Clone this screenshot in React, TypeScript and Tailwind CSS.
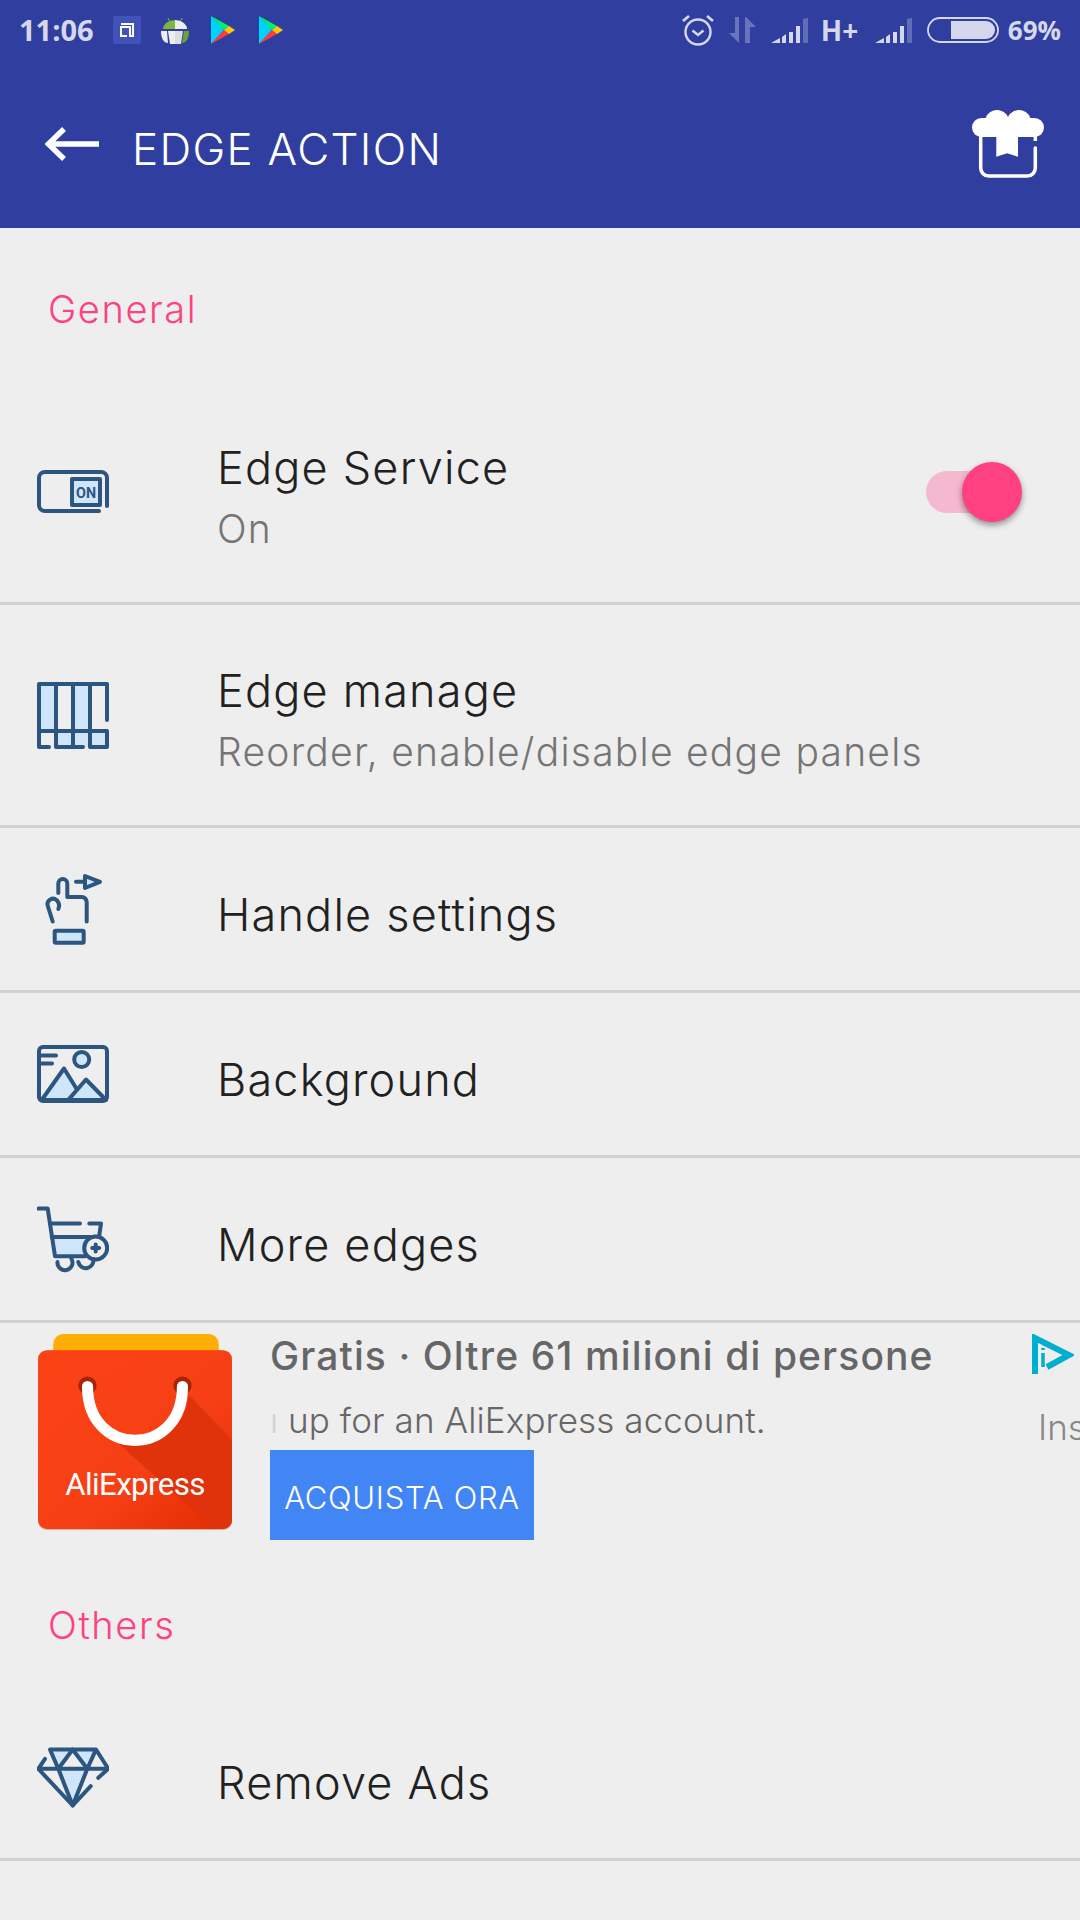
import React from "react";

const S = "#2c5580";
const F = "#cfe6fa";
const common = { fill: "none", stroke: S, strokeWidth: 4, strokeLinecap: "round" as const, strokeLinejoin: "round" as const };

function OnIcon() {
  return (
    <svg width="72" height="72" viewBox="0 0 72 72">
      <g {...common}>
        <path d="M70 50V22a6 6 0 0 0-6-6H8a6 6 0 0 0-6 6v27a6 6 0 0 0 6 6h54" />
        <rect x="35" y="23" width="28" height="26" fill={F} strokeWidth="4" />
      </g>
      <text x="49" y="41.5" textAnchor="middle" fontSize="15" fontWeight="700" fill={S} fontFamily="'Roboto', sans-serif" textLength="20" lengthAdjust="spacingAndGlyphs">ON</text>
    </svg>
  );
}
function ManageIcon() {
  return (
    <svg width="72" height="72" viewBox="0 0 72 72">
      <path fill={F} d="M2 5h17v47H2zM36 5h17v47H36zM19 52h34v16H19zM53 52h17v16H53z" />
      <path {...common} d="M2 5H70V41M2 5V68H12M19 5V68H46M36 5V68M53 5V68H70V52H2" />
    </svg>
  );
}
function HandleIcon() {
  return (
    <svg width="72" height="72" viewBox="0 0 72 72">
      <g {...common}>
        <path d="M21.3 20V10.5a4.5 4.5 0 0 1 9 0V24H44.7a5 5 0 0 1 5 5V48.5" />
        <path d="M15.7 48.5L10.5 32a5.5 5.5 0 0 1 9-5 8 8 0 0 1 1.8 9" />
        <rect x="17.7" y="57.8" width="29" height="12" rx="1" fill={F} />
        <path d="M39 8.8H48" />
        <path d="M48 3L63 8.8 48 15z" fill={F} />
      </g>
    </svg>
  );
}
function BgIcon() {
  return (
    <svg width="72" height="72" viewBox="0 0 72 72">
      <g {...common}>
        <rect x="2" y="9" width="68" height="54" rx="4" />
        <path d="M2 17.5H19M2 25.5H15" />
        <circle cx="44.7" cy="21.5" r="7.5" fill={F} />
        <path d="M4.7 62L27 30.5 40.3 52 31.3 62z" fill={F} />
        <path d="M31.3 62L49 41.5 69 62z" fill={F} />
      </g>
    </svg>
  );
}
function CartIcon() {
  return (
    <svg width="72" height="72" viewBox="0 0 72 72">
      <path fill={F} d="M14.7 34H53l-5 19H18z" />
      <g {...common}>
        <path d="M1.3 5.6H10.7L18 53.3H48" />
        <path d="M13 20.6H43M52.3 20.6H64L62 34M14.7 34H53" />
        <circle cx="58.7" cy="45" r="11.5" />
        <path d="M20.5 59a7.5 7.5 0 1 0 14-3M41.3 59a7.5 7.5 0 1 0 15-3" />
        <path d="M58.7 41.5v7M55.2 45h7" />
      </g>
    </svg>
  );
}
function DiamondIcon() {
  return (
    <svg width="72" height="72" viewBox="0 0 72 72">
      <path fill={F} d="M13 8.5H35.7L21.3 27.8zM35.7 8.5H59L50.3 27.8zM21.3 27.8H50.3L35.7 64.5z" />
      <g {...common}>
        <path d="M8 17.8L1.3 27.8H71.3L59 8.5H13L21.3 27.8 35.7 64.5 50.3 27.8 59 8.5" />
        <path d="M1.3 27.8L35.7 64.5 53.7 45.2M71.3 27.8L61.3 36.8M21.3 27.8L35.7 8.5 50.3 27.8" />
      </g>
    </svg>
  );
}

function Play() {
  return (
    <svg width="24" height="28" viewBox="0 0 24 28">
      <path d="M0 0L13 14 0 28z" fill="#00d2ff" />
      <path d="M0 0L18 10 13 14z" fill="#00f076" />
      <path d="M0 28L18 18 13 14z" fill="#ff3a44" />
      <path d="M18 10L24 14 18 18 13 14z" fill="#ffc900" />
    </svg>
  );
}
function Signal() {
  return (
    <svg width="37" height="25" viewBox="0 0 37 25" fill="#d5d8ec">
      <path d="M0 25L9 20V25zM11 19L15 16V25H11zM18 14H22V25H18zM25 8H29V25H25z" />
      <path d="M32 1L37 0V25H32z" opacity=".3" />
    </svg>
  );
}

function Row({ icon, title, sub, tall, children }: { icon: React.ReactNode; title: string; sub?: string; tall?: boolean; children?: React.ReactNode }) {
  return (
    <div className={`${tall ? "h-[223px]" : "h-[165px]"} flex items-center border-b-[3px] border-[#d1d1d1] pl-[37px] pr-[58px]`}>
      <div className="w-[180px] shrink-0">{icon}</div>
      <div className="flex-1 pt-[12px]">
        <div className="text-[45px] leading-[60px] font-light text-[#212121] tracking-[1.2px]">{title}</div>
        {sub && <div className="text-[39px] leading-[61px] font-light text-[#757575] tracking-[1.25px]">{sub}</div>}
      </div>
      {children}
    </div>
  );
}

export default function App() {
  return (
    <div className="w-[1080px] h-[1920px] overflow-hidden bg-[#eeeeee] font-['Inter','Liberation_Sans',sans-serif]">
      <header className="h-[228px] bg-[#303f9f] flex flex-col">
        <div className="h-[60px] flex items-center pl-[19px] pr-[19px] text-[#d5d8ec] font-['Open_Sans',sans-serif] font-bold text-[27px]">
          <span className="w-[94px] text-[29px]">11:06</span>
          <svg className="mr-[20px]" width="28" height="28" viewBox="0 0 28 28">
            <rect width="28" height="28" rx="2" fill="#4152b8" />
            <path d="M8 8H20V20H17V11H8V20H14" fill="none" stroke="#fff" strokeWidth="2" />
          </svg>
          <svg className="mr-[22px]" width="28" height="28" viewBox="0 0 28 28">
            <path d="M7 2L9 6M21 2L19 6" stroke="#7db53f" strokeWidth="1" />
            <path d="M2 13a12 9 0 0 1 12-9v9z" fill="#7db53f" />
            <path d="M14 4a12 9 0 0 1 12 9H14z" fill="#eeeeee" />
            <path d="M0 15H6L7 27C3 27 0 23 0 15z" fill="#eeeeee" />
            <path d="M7 15H14V28H9z" fill="#eeeeee" />
            <path d="M14 15H22L20 28H14z" fill="#dddddd" />
            <path d="M23 15H28C28 23 25 27 21 27z" fill="#6aa533" />
          </svg>
          <span className="mr-[24px] flex"><Play /></span>
          <span className="flex"><Play /></span>
          <span className="flex-1" />
          <svg className="mr-[15px]" width="32" height="32" viewBox="0 0 32 32" fill="none" stroke="#d5d8ec" strokeWidth="2.4">
            <circle cx="16" cy="18" r="12.5" />
            <path d="M10.5 16.5L16 21 21.5 16.5" strokeWidth="2.4" />
            <path d="M1 7L7 2M31 7L25 2" strokeWidth="2.6" />
          </svg>
          <svg className="mr-[15px]" width="27" height="26" viewBox="0 0 27 26" fill="#d5d8ec" opacity=".35">
            <path d="M10 0V26L0 16H6V0zM16 0H17L27 10H21V26H16z" />
          </svg>
          <span className="mr-[13px] flex"><Signal /></span>
          <span className="w-[36px] mr-[18px] leading-none text-[28px]">H+</span>
          <span className="mr-[15px] flex"><Signal /></span>
          <svg className="mr-[9px]" width="72" height="26" viewBox="0 0 72 26">
            <rect x="1" y="1" width="70" height="24" rx="12" fill="none" stroke="#d5d8ec" strokeWidth="1.8" />
            <path d="M24 4H59a9 9 0 0 1 0 18H24z" fill="#d5d8ec" />
          </svg>
          <span className="leading-none text-[26px]">69%</span>
        </div>
        <div className="flex-1 flex items-center pl-[45px] pr-[36px]">
          <svg className="w-[54px] h-[34px] mr-[33px] shrink-0" viewBox="0 0 54 34" fill="none" stroke="#fff" strokeWidth="5.5">
            <path d="M54 17H4M19 2L3.5 17 19 32" />
          </svg>
          <div className="flex-1 text-[44px] font-light text-white tracking-[1.3px] pt-[10px]">EDGE ACTION</div>
          <svg width="72" height="68" viewBox="0 0 72 68">
            <g fill="#fff">
              <circle cx="9.5" cy="17.5" r="9.5" />
              <circle cx="62.5" cy="17.5" r="9.5" />
              <circle cx="25" cy="12" r="12" />
              <circle cx="47" cy="12" r="12" />
              <rect x="9.5" y="8" width="53" height="19" />
              <path d="M24.3 20H46V46.7L35.2 43.3 24.3 46.7z" />
            </g>
            <path d="M8.7 26V58a8 8 0 0 0 8 8H55.3a8 8 0 0 0 8-8V38" fill="none" stroke="#fff" strokeWidth="3.5" strokeLinecap="round" />
            <path d="M63.3 26V31" stroke="#fff" strokeWidth="3.5" />
          </svg>
        </div>
      </header>

      <div className="h-[154px] pl-[48px] pt-[54px] text-[38px] leading-[54px] font-light text-[#ff4081] tracking-[1.6px]">General</div>

      <Row icon={<OnIcon />} title="Edge Service" sub="On" tall>
        <div className="relative w-[76px] h-[42px] mr-[20px] rounded-full bg-[#f4b9cf]">
          <div className="absolute left-[36px] -top-[9px] w-[60px] h-[60px] rounded-full bg-[#ff4081] shadow-[0_3px_6px_rgba(0,0,0,0.4)]" />
        </div>
      </Row>
      <Row icon={<ManageIcon />} title="Edge manage" sub="Reorder, enable/disable edge panels" tall />
      <Row icon={<HandleIcon />} title="Handle settings" />
      <Row icon={<BgIcon />} title="Background" />
      <Row icon={<CartIcon />} title="More edges" />

      <div className="h-[232px] flex pl-[37px] pt-[11px] overflow-hidden">
        <div className="shrink-0 w-[196px] mr-[37px]">
          <svg width="196" height="198" viewBox="0 0 194 196">
            <defs>
              <linearGradient id="ali" x1="0" y1="0" x2="1" y2="1">
                <stop offset="0" stopColor="#fb4316" />
                <stop offset="0.6" stopColor="#f63f14" />
                <stop offset="1" stopColor="#e22d00" />
              </linearGradient>
            </defs>
            <rect x="16" y="0" width="164" height="40" rx="10" fill="#ffae06" />
            <rect x="1" y="16" width="192" height="178" rx="9" fill="#b23a1a" opacity=".35" />
            <rect x="1" y="16" width="192" height="177" rx="9" fill="url(#ali)" />
            <path d="M150 60L193 105V184a9 9 0 0 1-9 9H175L79 107C115 111 148 96 150 60z" fill="#e0330c" />
            <circle cx="50" cy="51" r="9" fill="#a82408" />
            <circle cx="144" cy="51" r="9" fill="#a82408" />
            <path d="M50 52C50 123 144 123 144 52" fill="none" stroke="#fff" strokeWidth="11" strokeLinecap="round" />
            <text x="97" y="159" textAnchor="middle" fontSize="31" fill="#fff" fontFamily="Roboto, sans-serif" letterSpacing="-0.6">AliExpress</text>
          </svg>
        </div>
        <div className="w-[762px] shrink-0">
          <div className="h-[44px] text-[39px] leading-[44px] font-medium text-[#666666] tracking-[1.1px] whitespace-nowrap">Gratis · Oltre 61 milioni di persone</div>
          <div className="mt-[17px] h-[50px] flex text-[35px] leading-[50px] font-light text-[#666666] tracking-[0.1px] whitespace-nowrap">
            <span className="w-[18px] opacity-20">ı</span>
            <span>up for an AliExpress account.</span>
          </div>
          <div className="mt-[5px] w-[264px] h-[90px] pt-[6px] bg-[#4285f4] flex items-center justify-center text-[31px] font-light text-white tracking-[0.7px]">ACQUISTA ORA</div>
        </div>
        <div className="shrink-0 w-[48px]">
          <svg width="42" height="42" viewBox="0 0 42 42" fill="none" stroke="#00afd0" strokeWidth="6">
            <path d="M3 40V4L37 21 15 33" />
            <path d="M11 19V33" strokeWidth="3.5" />
            <path d="M11 14V16" strokeWidth="3.5" />
          </svg>
          <div className="mt-[26px] pl-[6px] text-[35px] leading-[50px] font-light text-[#888888] whitespace-nowrap">Ins</div>
        </div>
      </div>

      <div className="h-[141px] pl-[48px] pt-[43px] text-[38px] leading-[54px] font-light text-[#ff4081] tracking-[1.6px]">Others</div>
      <Row icon={<DiamondIcon />} title="Remove Ads" />
    </div>
  );
}
